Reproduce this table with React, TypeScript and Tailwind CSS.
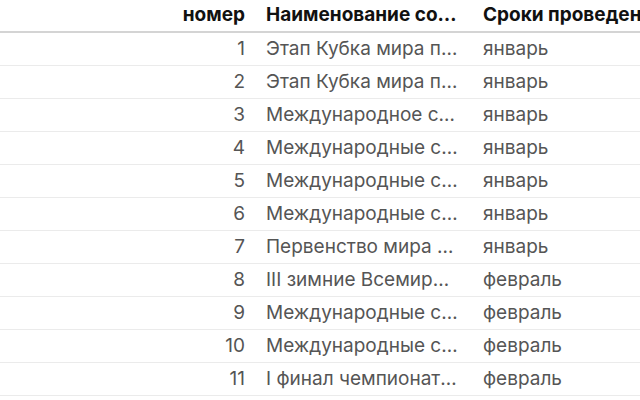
import React from 'react';

const rows: [number, string, string][] = [
  [1, 'Этап Кубка мира по лыжным гонкам', 'январь'],
  [2, 'Этап Кубка мира по биатлону', 'январь'],
  [3, 'Международное соревнование', 'январь'],
  [4, 'Международные соревнования', 'январь'],
  [5, 'Международные соревнования', 'январь'],
  [6, 'Международные соревнования', 'январь'],
  [7, 'Первенство мира по хоккею', 'январь'],
  [8, 'III зимние Всемирные игры', 'февраль'],
  [9, 'Международные соревнования', 'февраль'],
  [10, 'Международные соревнования', 'февраль'],
  [11, 'I финал чемпионата России', 'февраль'],
];

const cols = 'grid grid-cols-[165px_92px_214px_240px]';

export default function App() {
  return (
    <div className="w-[640px] h-[400px] overflow-hidden bg-white font-['Inter',sans-serif] text-[19px]">
      <div className="w-[711px]">
        {/* Header */}
        <div className={`${cols} h-[33px] items-center border-b-2 border-[#d4d4d4] font-bold text-[#111]`}>
          <div />
          <div className="text-right pr-[12px] whitespace-nowrap">номер</div>
          <div className="pl-[9px] pr-[12px] truncate">Наименование соревнования</div>
          <div className="pl-[12px] whitespace-nowrap overflow-hidden">Сроки проведения</div>
        </div>
        {/* Rows */}
        {rows.map(([n, name, when]) => (
          <div key={n} className={`${cols} h-[33px] items-center border-b border-[#ebebeb] text-[#555]`}>
            <div />
            <div className="text-right pr-[12px]">{n}</div>
            <div className="pl-[9px] pr-[12px] truncate">{name}</div>
            <div className="pl-[12px] whitespace-nowrap">{when}</div>
          </div>
        ))}
      </div>
    </div>
  );
}
